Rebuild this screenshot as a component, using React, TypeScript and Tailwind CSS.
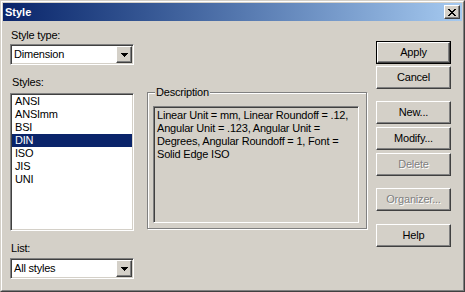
import React from "react";

const raised =
  "border border-t-white border-l-white border-r-[#404040] border-b-[#404040] shadow-[inset_-1px_-1px_#808080]";
const sunken =
  "border border-t-[#808080] border-l-[#808080] border-b-white border-r-white shadow-[inset_1px_1px_#404040,inset_-1px_-1px_#d4d0c8]";

function Arrow() {
  return (
    <svg width="7" height="4" viewBox="0 0 7 4">
      <path d="M0 0h7L3.5 4z" fill="black" shapeRendering="crispEdges" />
    </svg>
  );
}

function Combo({ value, mt }: { value: string; mt: string }) {
  return (
    <div className={`${mt} w-[124px] h-[21px] bg-white ${sunken} flex items-center`}>
      <span className="flex-1 pl-[3px] leading-[13px] text-black">{value}</span>
      <div className={`w-[16px] h-[17px] mr-[1px] bg-[#d4d0c8] ${raised} flex items-center justify-center`}>
        <Arrow />
      </div>
    </div>
  );
}

function Btn({
  label,
  mt,
  disabled,
  def,
}: {
  label: string;
  mt: string;
  disabled?: boolean;
  def?: boolean;
}) {
  if (def) {
    return (
      <div className={`${mt} w-[75px] h-[23px] border border-black`}>
        <div className={`w-full h-full ${raised} flex items-center justify-center text-black`}>
          {label}
        </div>
      </div>
    );
  }
  return (
    <div className={`${mt} w-[75px] h-[23px] ${raised} flex items-center justify-center`}>
      {disabled ? (
        <span className="text-[#808080] [text-shadow:1px_1px_0_#ffffff]">{label}</span>
      ) : (
        <span className="text-black">{label}</span>
      )}
    </div>
  );
}

export default function App() {
  const items = ["ANSI", "ANSImm", "BSI", "DIN", "ISO", "JIS", "UNI"];
  return (
    <div className="w-[465px] h-[292px] bg-[#d4d0c8] font-['Liberation_Sans',Arial,sans-serif] text-[11px] tracking-[-0.2px] leading-[13px] text-black overflow-hidden">
      <div className="w-full h-full border border-t-[#d4d0c8] border-l-[#d4d0c8] border-r-[#404040] border-b-[#404040]">
        <div className="w-full h-full border border-t-white border-l-white border-r-[#808080] border-b-[#808080] p-[1px] flex flex-col">
          {/* Title bar */}
          <div className="h-[18px] bg-gradient-to-r from-[#0a246a] to-[#a6caf0] flex items-center justify-between pl-[2px] pr-[2px]">
            <span className="text-white font-bold text-[11px] tracking-normal">Style</span>
            <div className={`w-[16px] h-[14px] bg-[#d4d0c8] ${raised} flex items-center justify-center`}>
              <svg width="8" height="7" viewBox="0 0 8 7">
                <path
                  d="M0 0h2v1h1v1h2V1h1V0h2v1H7v1H6v1H5v1h1v1h1v1h1v1H6V6H5V5H3v1H2v1H0V6h1V5h1V4h1V3H2V2H1V1H0z"
                  fill="black"
                  shapeRendering="crispEdges"
                />
              </svg>
            </div>
          </div>

          {/* Body */}
          <div className="flex flex-row pl-[7px]">
            {/* Left column */}
            <div className="flex flex-col w-[124px]">
              <div className="mt-[8px] pl-[1px]">Style type:</div>
              <Combo value="Dimension" mt="mt-[2px]" />
              <div className="mt-[11px] pl-[2px]">Styles:</div>
              <div className={`mt-[4px] w-[124px] h-[138px] bg-white ${sunken} p-[1px]`}>
                {items.map((it) => (
                  <div
                    key={it}
                    className={`h-[13px] pl-[3px] leading-[13px] ${
                      it === "DIN" ? "bg-[#0a246a] text-white" : "text-black"
                    }`}
                  >
                    {it}
                  </div>
                ))}
              </div>
              <div className="mt-[11px] pl-[1px]">List:</div>
              <Combo value="All styles" mt="mt-[3px]" />
            </div>

            {/* Description group */}
            <div className="ml-[13px] mt-[71px] w-[220px] h-[137px] relative border border-[#808080] shadow-[1px_1px_0_#ffffff,inset_1px_1px_0_#ffffff]">
              <div className="absolute top-[-6px] left-[7px] px-[1px] bg-[#d4d0c8] leading-[11px]">
                Description
              </div>
              <div className={`mt-[13px] ml-[5px] w-[206px] h-[117px] ${sunken} pl-[3px] pt-[2px] whitespace-nowrap`}>
                Linear Unit = mm, Linear Roundoff = .12,
                <br />
                Angular Unit = .123, Angular Unit =
                <br />
                Degrees, Angular Roundoff = 1, Font =
                <br />
                Solid Edge ISO
              </div>
            </div>

            {/* Buttons */}
            <div className="ml-[9px] flex flex-col">
              <Btn label="Apply" mt="mt-[20px]" def />
              <Btn label="Cancel" mt="mt-[2px]" />
              <Btn label="New..." mt="mt-[12px]" />
              <Btn label="Modify..." mt="mt-[3px]" />
              <Btn label="Delete" mt="mt-[3px]" disabled />
              <Btn label="Organizer..." mt="mt-[12px]" disabled />
              <Btn label="Help" mt="mt-[13px]" />
            </div>
          </div>
        </div>
      </div>
    </div>
  );
}
